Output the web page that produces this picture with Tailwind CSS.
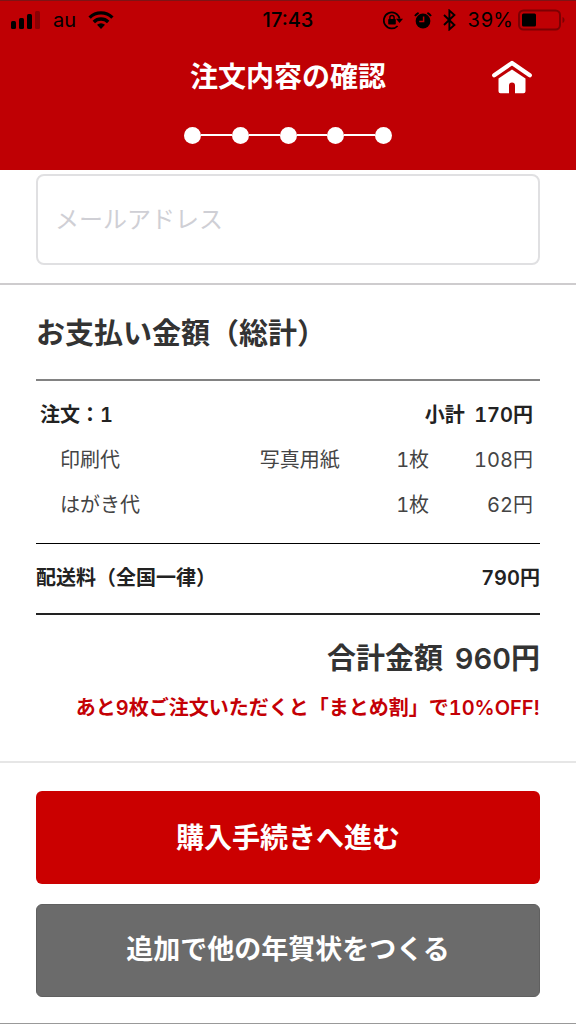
<!DOCTYPE html>
<html lang="ja">
<head>
<meta charset="utf-8">
<meta name="viewport" content="width=device-width, initial-scale=1">
<title>注文内容の確認</title>
<script src="https://cdn.jsdelivr.net/npm/@tailwindcss/browser@4"></script>
</head>
<body class="bg-white text-[#333] tabular-nums font-['Inter','Noto_Sans_CJK_JP',sans-serif]">
<header class="bg-[#bf0004] border-t border-[#7c1416] h-[170px] flex flex-col">
  <div class="grid grid-cols-[1fr_auto_1fr] items-center h-[38px] px-[11px] text-black text-xl leading-6">
    <div class="flex items-center gap-3">
      <svg class="w-[30px] h-[18px]" viewBox="0 0 30 18" aria-hidden="true">
        <rect x="0" y="10" width="5" height="8" rx="1.5"/>
        <rect x="8" y="7" width="5" height="11" rx="1.5"/>
        <rect x="16" y="3" width="5" height="15" rx="1.5"/>
        <rect x="24" y="0" width="5" height="18" rx="1.5" fill="#8b0004"/>
      </svg>
      <span>au</span>
      <svg class="w-[26px] h-[18px]" viewBox="0 0 26 18" aria-hidden="true">
        <g fill="none" stroke="#000" stroke-width="3.4">
          <path d="M1.6 6.6a16.2 16.2 0 0 1 22.8 0"/>
          <path d="M5.8 11a10.2 10.2 0 0 1 14.4 0"/>
        </g>
        <path d="M13 18l-4-4.2a5.8 5.8 0 0 1 8 0z"/>
      </svg>
    </div>
    <div class="text-center font-medium proportional-nums">17:43</div>
    <div class="flex items-center justify-end gap-[11px]">
      <svg class="w-[20px] h-[20px] shrink-0" viewBox="0 0 20 20" aria-hidden="true">
        <path d="M14.6 16A8 8 0 1 1 16.6 8.6" fill="none" stroke="#000" stroke-width="1.8"/>
        <path d="M13 8.8h7l-3.5 4.2z"/>
        <rect x="5.2" y="9" width="7.6" height="5.6" rx="0.8"/>
        <path d="M6.9 9.2V7.6a2.1 2.1 0 0 1 4.2 0V9.2" fill="none" stroke="#000" stroke-width="1.4"/>
      </svg>
      <svg class="w-[18px] h-[18px] shrink-0" viewBox="0 0 18 18" aria-hidden="true">
        <circle cx="9" cy="10" r="7.4"/>
        <path d="M1 5A9 9 0 0 1 4.6 1.8M17 5A9 9 0 0 0 13.4 1.8" fill="none" stroke="#000" stroke-width="2"/>
        <path d="M9.6 5.4v5H5.2" fill="none" stroke="#bf0004" stroke-width="1.5"/>
      </svg>
      <svg class="w-[13px] h-[22px] shrink-0" viewBox="0 0 13 22" aria-hidden="true">
        <path d="M1 6l10.4 10L6.4 20.4V1.6L11.4 6 1 16" fill="none" stroke="#000" stroke-width="1.9"/>
      </svg>
      <div class="flex items-center gap-[5px]">
        <span>39%</span>
        <svg class="w-[47px] h-[22px] shrink-0" viewBox="0 0 47 22" aria-hidden="true">
          <rect x="1" y="1.5" width="41" height="19" rx="4.5" fill="none" stroke="#7c0003" stroke-width="2"/>
          <rect x="4" y="4.5" width="14" height="13" rx="1.5"/>
          <path d="M44.5 8v6c1.500-.5 2-1.700 2-3s-.5-2.500-2-3z" fill="#7c0003"/>
        </svg>
      </div>
    </div>
  </div>
  <div class="grid grid-cols-[1fr_auto_1fr] items-center h-[76px] px-11 text-white">
    <h1 class="col-start-2 font-bold text-[28px] leading-10">注文内容の確認</h1>
    <a href="#" aria-label="ホーム" class="justify-self-end">
      <svg class="w-10 h-[34px]" viewBox="0 0 40 34" fill="#fff" aria-hidden="true">
        <path d="M2.2 15.3L20 3l17.8 12.3" fill="none" stroke="#fff" stroke-width="4.2" stroke-linecap="round" stroke-linejoin="round"/>
        <path d="M6.5 18.500L20 9.500 33.500 18.500v12.700a2 2 0 0 1-2 2H23v-7.700a3 3 0 0 0-6 0v7.700H8.500a2 2 0 0 1-2-2z"/>
      </svg>
    </a>
  </div>
  <div class="flex items-center self-center w-[208px] h-10" role="img" aria-label="ステップ 5 / 5">
    <span class="size-[17px] rounded-full bg-white"></span><span class="flex-1 h-[2px] bg-white"></span>
    <span class="size-[17px] rounded-full bg-white"></span><span class="flex-1 h-[2px] bg-white"></span>
    <span class="size-[17px] rounded-full bg-white"></span><span class="flex-1 h-[2px] bg-white"></span>
    <span class="size-[17px] rounded-full bg-white"></span><span class="flex-1 h-[2px] bg-white"></span>
    <span class="size-[17px] rounded-full bg-white"></span>
  </div>
</header>
<main>
  <section class="px-9 pt-1 pb-[18px] border-b-2 border-[#ceccce]">
    <input type="email" aria-label="メールアドレス" placeholder="メールアドレス" class="block w-full h-[91px] rounded-lg border-2 border-[#e0e0e2] px-[17px] text-2xl placeholder:text-[#cfcfd5] outline-none">
  </section>
  <section class="px-9 pt-[29px] border-b-2 border-[#e6e6e6] pb-10">
    <h2 class="font-semibold text-[29px] leading-10 pb-[25px]">お支払い金額（総計）</h2>
    <table class="w-full table-fixed text-xl leading-[25px] border-t-2 border-[#828282]">
      <colgroup><col class="w-[44%]"><col class="w-[17%]"><col class="w-[17%]"><col class="w-[22%]"></colgroup>
      <thead>
        <tr class="text-[#222]">
          <th scope="col" class="text-left font-semibold pt-[22px] pb-[10px] pl-1">注文：1</th>
          <th scope="col" colspan="3" class="text-right font-semibold pt-[22px] pb-[10px] pr-[7px]">小計 <span class="ml-1">170円</span></th>
        </tr>
      </thead>
      <tbody class="text-[#444]">
        <tr>
          <td class="py-[10px] pl-6">印刷代</td>
          <td class="py-[10px] pl-[2px] whitespace-nowrap">写真用紙</td>
          <td class="py-[10px] text-right">1枚</td>
          <td class="py-[10px] pr-[7px] text-right">108円</td>
        </tr>
        <tr>
          <td class="pt-[10px] pb-[25px] pl-6">はがき代</td>
          <td></td>
          <td class="pt-[10px] pb-[25px] text-right">1枚</td>
          <td class="pt-[10px] pb-[25px] pr-[7px] text-right">62円</td>
        </tr>
      </tbody>
    </table>
    <div class="flex justify-between items-center border-t border-black border-b-2 border-b-[#222] py-[22px] text-xl leading-[25px] font-semibold text-[#222]">
      <span>配送料（全国一律）</span><span>790円</span>
    </div>
    <p class="pt-6 text-right font-semibold text-[29px] leading-10">合計金額 <span class="ml-1">960円</span></p>
    <p class="pt-4 text-right font-semibold text-xl leading-[26px] text-[#c40005] whitespace-nowrap">あと9枚ご注文いただくと「まとめ割」で10%OFF!</p>
  </section>
  <div class="flex flex-col gap-5 px-9 pt-7 pb-[26px] border-b border-[#999]">
    <button type="button" class="h-[93px] rounded-md bg-[#cb0000] text-white font-semibold text-[28px]">購入手続きへ進む</button>
    <button type="button" class="h-[93px] rounded-md bg-[#6b6b6b] border border-[#606060] text-white font-semibold text-[27px]">追加で他の年賀状をつくる</button>
  </div>
</main>
</body>
</html>
